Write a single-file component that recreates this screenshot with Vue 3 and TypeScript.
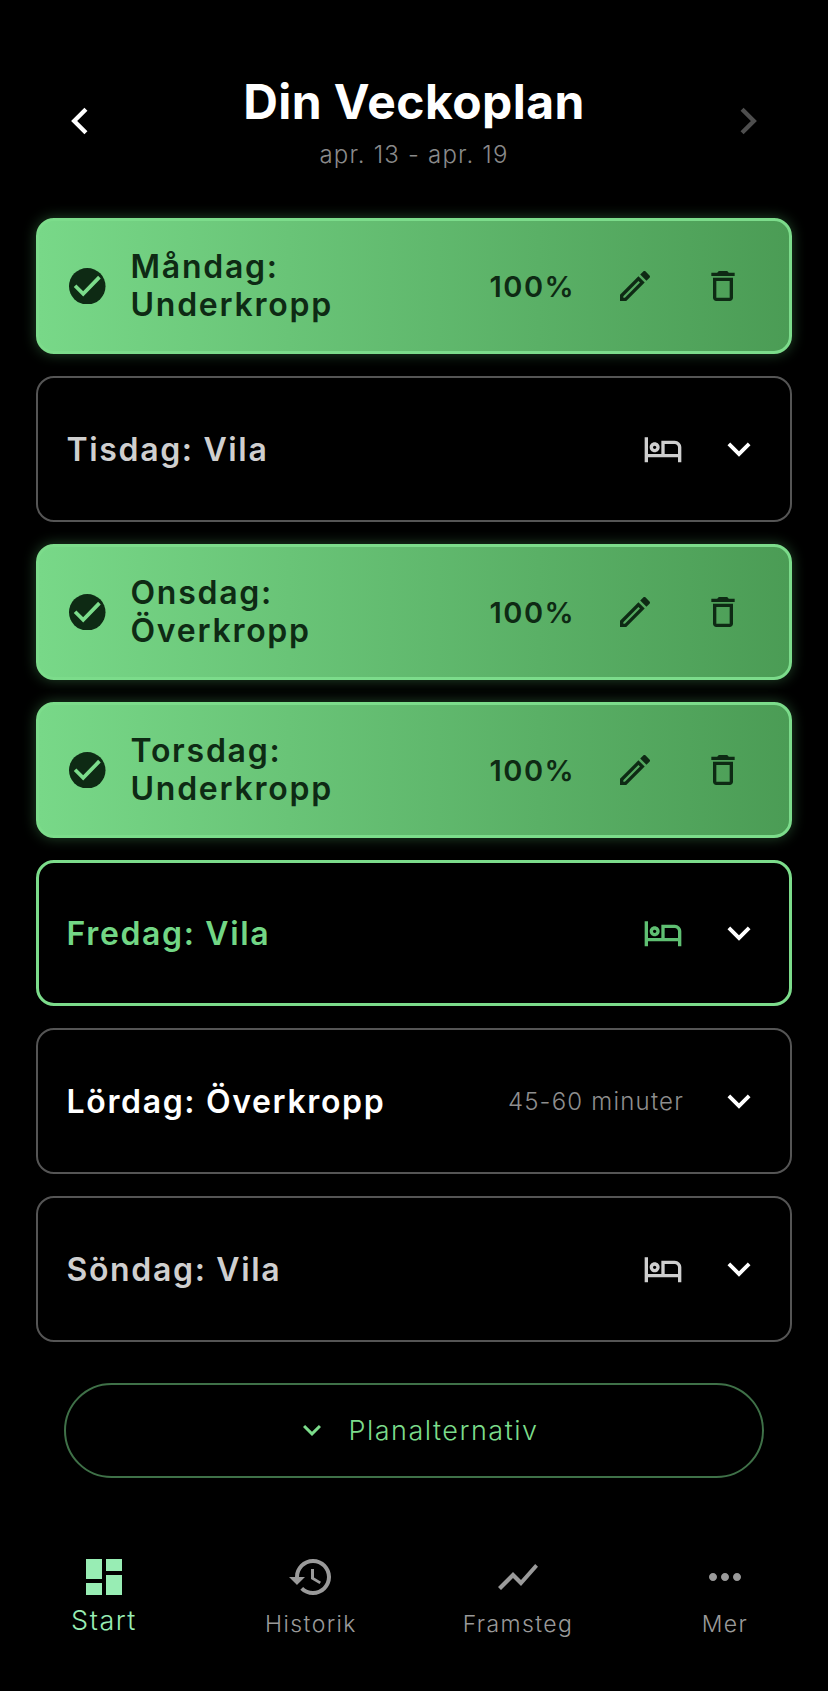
<script setup lang="ts">
interface Day { title: string; state: 'done' | 'rest' | 'today' | 'plan'; meta?: string }
const days: Day[] = [
  { title: 'Måndag: Underkropp', state: 'done' },
  { title: 'Tisdag: Vila', state: 'rest' },
  { title: 'Onsdag: Överkropp', state: 'done' },
  { title: 'Torsdag: Underkropp', state: 'done' },
  { title: 'Fredag: Vila', state: 'today' },
  { title: 'Lördag: Överkropp', state: 'plan', meta: '45-60 minuter' },
  { title: 'Söndag: Vila', state: 'rest' },
]
const P = {
  edit: 'M3 17.25V21h3.75L17.81 9.94l-3.75-3.75L3 17.25zM5.92 19H5v-.92l9.06-9.06.92.92L5.92 19zM20.71 5.63l-2.34-2.34c-.2-.2-.45-.29-.71-.29s-.51.1-.7.29l-1.83 1.83 3.75 3.75 1.83-1.83c.39-.39.39-1.02 0-1.41z',
  trash: 'M6 19c0 1.1.9 2 2 2h8c1.1 0 2-.9 2-2V7H6v12zM8 9h8v10H8V9zm7.5-5-1-1h-5l-1 1H5v2h14V4z',
  bed: 'M7 14c1.66 0 3-1.34 3-3S8.66 8 7 8s-3 1.34-3 3 1.34 3 3 3zm0-4c.55 0 1 .45 1 1s-.45 1-1 1-1-.45-1-1 .45-1 1-1zm12-3h-8v8H3V5H1v15h2v-3h18v3h2v-9c0-2.21-1.79-4-4-4zm2 8h-8V9h6c1.1 0 2 .9 2 2v4z',
  more: 'M16.59 8.59 12 13.17 7.41 8.59 6 10l6 6 6-6z',
}
const nav = [
  { label: 'Start', active: true, d: 'M3 13h8V3H3v10zm0 8h8v-6H3v6zm10 0h8V11h-8v10zm0-18v6h8V3h-8z' },
  { label: 'Historik', active: false, d: 'M13 3c-4.97 0-9 4.03-9 9H1l3.89 3.89.07.14L9 12H6c0-3.87 3.13-7 7-7s7 3.13 7 7-3.13 7-7 7c-1.93 0-3.68-.79-4.94-2.06l-1.42 1.42C8.27 19.99 10.51 21 13 21c4.97 0 9-4.03 9-9s-4.03-9-9-9zm-1 5v5l4.28 2.54.72-1.21-3.5-2.08V8H12z' },
  { label: 'Framsteg', active: false, d: 'M3.5 18.49l6-6.01 4 4L22 6.92l-1.41-1.41-7.09 7.97-4-4L2 16.99z' },
  { label: 'Mer', active: false, d: 'M6 10c-1.1 0-2 .9-2 2s.9 2 2 2 2-.9 2-2-.9-2-2-2zm12 0c-1.1 0-2 .9-2 2s.9 2 2 2 2-.9 2-2-.9-2-2-2zm-6 0c-1.1 0-2 .9-2 2s.9 2 2 2 2-.9 2-2-.9-2-2-2z' },
]
</script>

<template>
  <div class="app">
    <header class="head">
      <svg class="arrow" viewBox="0 0 18 28"><path d="M15 3 4 14l11 11" /></svg>
      <div class="head-mid">
        <h1>Din Veckoplan</h1>
        <p>apr. 13 - apr. 19</p>
      </div>
      <svg class="arrow dim" viewBox="0 0 18 28"><path d="M3 3l11 11L3 25" /></svg>
    </header>

    <main class="list">
      <template v-for="d in days" :key="d.title">
        <div v-if="d.state === 'done'" class="card done">
          <svg class="i-check" viewBox="0 0 36 36">
            <circle cx="18" cy="18" r="18" />
            <path d="M6 17.5 14 25.5 30 9" />
          </svg>
          <div class="done-title">{{ d.title }}</div>
          <div class="pct">100%</div>
          <svg class="i40 edit" viewBox="0 0 24 24"><path :d="P.edit" /></svg>
          <svg class="i40 trash" viewBox="0 0 24 24"><path :d="P.trash" /></svg>
        </div>
        <div v-else class="card row" :class="d.state">
          <div class="title">{{ d.title }}</div>
          <div v-if="d.meta" class="meta">{{ d.meta }}</div>
          <svg v-else class="i40 bed" viewBox="0 0 24 24"><path :d="P.bed" /></svg>
          <svg class="chev" viewBox="0 0 24 24"><path :d="P.more" /></svg>
        </div>
      </template>
    </main>

    <div class="opt-wrap">
      <button class="opt">
        <svg class="opt-chev" viewBox="0 0 24 24"><path :d="P.more" /></svg>
        <span>Planalternativ</span>
      </button>
    </div>

    <nav class="nav">
      <div v-for="n in nav" :key="n.label" class="tab" :class="{ active: n.active }">
        <svg class="tab-icon" viewBox="0 0 24 24"><path :d="n.d" /></svg>
        <span>{{ n.label }}</span>
      </div>
    </nav>
  </div>
</template>

<style>
html, body { margin: 0; background: #000; }
</style>

<style scoped>
.app {
  width: 828px;
  height: 1691px;
  background: #000;
  color: #fff;
  font-family: Inter, "Liberation Sans", sans-serif;
  overflow: hidden;
  display: flex;
  flex-direction: column;
}
.head {
  display: flex;
  align-items: center;
  justify-content: space-between;
  padding: 97px 68px 0 68px;
  height: 145px;
  box-sizing: border-box;
}
.head-mid { text-align: center; }
h1 {
  margin: 0;
  font-size: 48px;
  line-height: 57px;
  font-weight: 700;
  letter-spacing: 0.45px;
}
.head-mid p {
  margin: 10px 0 0;
  font-size: 24px;
  line-height: 29px;
  color: #8a8a8a;
  font-weight: 300;
  letter-spacing: 1.2px;
}
.arrow { width: 23px; height: 30px; fill: none; stroke: #fff; stroke-width: 4; }
.arrow.dim { stroke: #4e4e4e; }
.list {
  margin: 73px 36px 0;
  display: flex;
  flex-direction: column;
  gap: 22px;
}
.card {
  box-sizing: border-box;
  border-radius: 18px;
  display: flex;
  align-items: center;
}
.done {
  height: 136px;
  border: 3px solid #7cdc8b;
  background: linear-gradient(90deg, #78d888 0%, #4b9c55 100%);
  box-shadow: 0 0 14px rgba(110, 220, 130, 0.32);
  color: #0e2a14;
  padding: 0 0 0 30px;
}
.i-check { width: 36.5px; height: 36.5px; flex: none; margin-right: 25px; }
.i-check circle { fill: #0e2a14; }
.i-check path { fill: none; stroke: #7cdc8b; stroke-width: 3.6; }
.done-title {
  width: 330px;
  font-size: 32px;
  line-height: 38px;
  font-weight: 600;
  letter-spacing: 1.75px;
}
.pct {
  width: 92px;
  margin-left: 29px;
  font-size: 29px;
  font-weight: 600;
  letter-spacing: 1.5px;
}
.i40 { width: 40px; height: 40px; flex: none; }
.edit { fill: #0e2a14; margin-left: 33.5px; }
.trash { fill: #0e2a14; margin-left: 48px; }
.row {
  height: 146px;
  border: 2px solid #555;
  padding: 0 28px 0 28.5px;
}
.row.today { border: 3px solid #7cdc8b; padding-left: 27.5px; padding-right: 27px; }
.title {
  flex: 1;
  font-size: 32px;
  font-weight: 600;
  letter-spacing: 1.65px;
  color: #fff;
}
.rest .title { color: #cfcfcf; }
.today .title { color: #72d685; }
.meta { font-size: 24px; font-weight: 300; color: #8e8e8e; letter-spacing: 1.2px; margin-right: 32px; }
.bed { fill: #cfcfcf; margin-right: 33px; }
.today .bed { fill: #5fbf72; }
.chev { width: 46px; height: 46px; fill: #fff; flex: none; }
.opt-wrap { margin-top: 40.5px; padding: 0 64px; }
.opt {
  width: 100%;
  height: 95px;
  box-sizing: border-box;
  border: 2px solid #3f7148;
  border-radius: 48px;
  background: transparent;
  color: #7cdc8b;
  font: inherit;
  font-size: 27px;
  font-weight: 300;
  letter-spacing: 1.5px;
  display: flex;
  align-items: center;
  justify-content: center;
  gap: 18px;
  padding: 0 0 0 5px;
}
.opt-chev { width: 36px; height: 36px; fill: #7cdc8b; }
.nav {
  margin-top: 75px;
  display: grid;
  grid-template-columns: repeat(4, 207px);
}
.tab {
  display: flex;
  flex-direction: column;
  align-items: center;
  color: #9a9a9a;
  font-size: 23px;
  font-weight: 300;
  letter-spacing: 1.4px;
}
.tab span { line-height: 30px; padding-left: 1px; }
.tab-icon { width: 48px; height: 48px; fill: #9a9a9a; margin-bottom: 8px; }
.tab.active { color: #98edb4; font-size: 27px; letter-spacing: 1.5px; }
.tab.active .tab-icon { fill: #98edb4; margin-bottom: 5px; }
</style>
